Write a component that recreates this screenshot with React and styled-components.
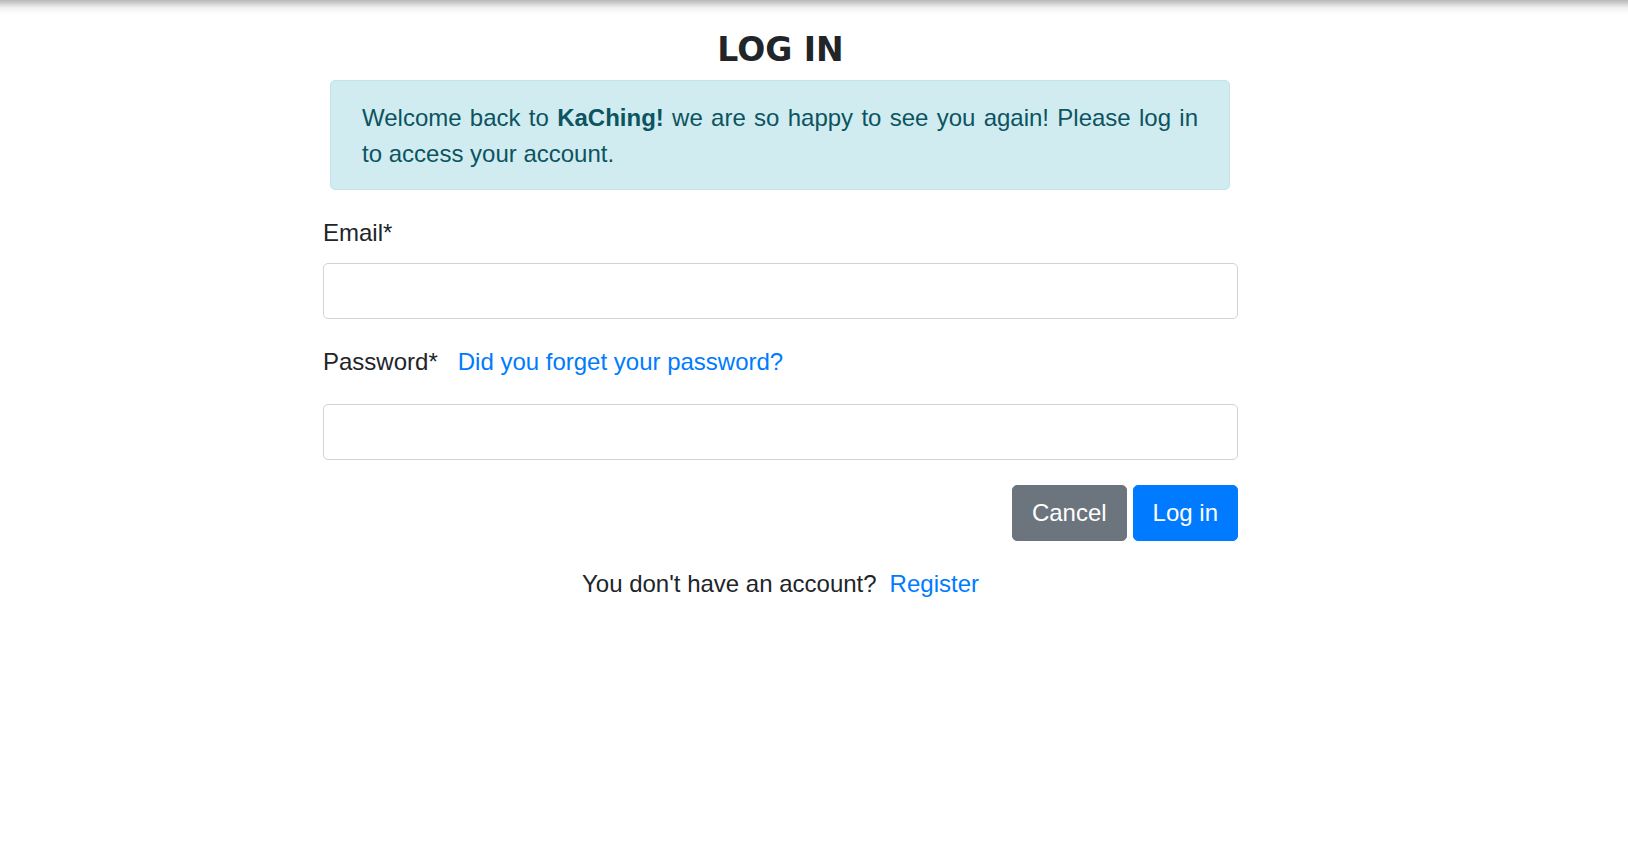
import React from 'react';
import styled, { createGlobalStyle } from 'styled-components';

const GlobalStyle = createGlobalStyle`
  html, body {
    margin: 0;
    padding: 0;
    background: #fff;
  }
  body {
    font-family: "Liberation Sans", Arial, sans-serif;
    color: #212529;
  }
`;

const TopShadow = styled.div`
  position: fixed;
  top: 0;
  left: 0;
  right: 0;
  height: 14px;
  pointer-events: none;
  background: linear-gradient(rgba(0, 0, 0, 0.28), rgba(0, 0, 0, 0.06) 55%, rgba(0, 0, 0, 0));
`;

const Container = styled.main`
  width: 915px;
  margin-left: 323px;
  padding-top: 31px;
  display: flex;
  flex-direction: column;
`;

const Title = styled.h1`
  margin: 0;
  font-family: "DejaVu Sans", "Liberation Sans", sans-serif;
  font-weight: 800;
  font-size: 33px;
  line-height: 38px;
  text-align: center;
  color: #212529;
`;

const Alert = styled.div`
  width: 900px;
  box-sizing: border-box;
  margin: 11px 0 0 7px;
  padding: 19px 31px 17px;
  background: #d1ecf1;
  border: 1px solid #bee5eb;
  border-radius: 5px;
  color: #0c5460;
  font-size: 24px;
  line-height: 36px;
  text-align: justify;

  strong {
    font-weight: 700;
  }
`;

const FieldLabel = styled.div`
  display: flex;
  align-items: baseline;
  gap: 20px;
  margin-top: ${p => p.$top}px;
  margin-bottom: ${p => p.$bottom}px;
  font-size: 24px;
  line-height: 36px;
`;

const Link = styled.a`
  color: #007bff;
  text-decoration: none;
  cursor: pointer;
`;

const Input = styled.input`
  display: block;
  width: 100%;
  height: 56px;
  box-sizing: border-box;
  padding: 8px 16px;
  border: 1px solid #ced4da;
  border-radius: 5px;
  font-family: inherit;
  font-size: 24px;
  color: #495057;
  outline: none;
`;

const Actions = styled.div`
  display: flex;
  justify-content: flex-end;
  gap: 6px;
  margin-top: 25px;
`;

const Button = styled.button`
  height: 56px;
  padding: 9px 19px;
  border: 1px solid ${p => (p.$primary ? '#007bff' : '#6c757d')};
  border-radius: 5px;
  background: ${p => (p.$primary ? '#007bff' : '#6c757d')};
  color: #fff;
  font-family: inherit;
  font-size: 24px;
  line-height: 36px;
  cursor: pointer;
`;

const Footer = styled.p`
  display: flex;
  justify-content: center;
  gap: 13px;
  margin: 25px 0 0;
  font-size: 24px;
  line-height: 36px;
`;

export default function App() {
  return (
    <>
      <GlobalStyle />
      <TopShadow />
      <Container>
        <Title>LOG IN</Title>
        <Alert>
          Welcome back to <strong>KaChing!</strong> we are so happy to see you again! Please log in to
          access your account.
        </Alert>

        <FieldLabel $top={25} $bottom={12}>
          <span>Email*</span>
        </FieldLabel>
        <Input type="email" />

        <FieldLabel $top={25} $bottom={24}>
          <span>Password*</span>
          <Link>Did you forget your password?</Link>
        </FieldLabel>
        <Input type="password" />

        <Actions>
          <Button>Cancel</Button>
          <Button $primary>Log in</Button>
        </Actions>

        <Footer>
          <span>You don't have an account?</span>
          <Link>Register</Link>
        </Footer>
      </Container>
    </>
  );
}
